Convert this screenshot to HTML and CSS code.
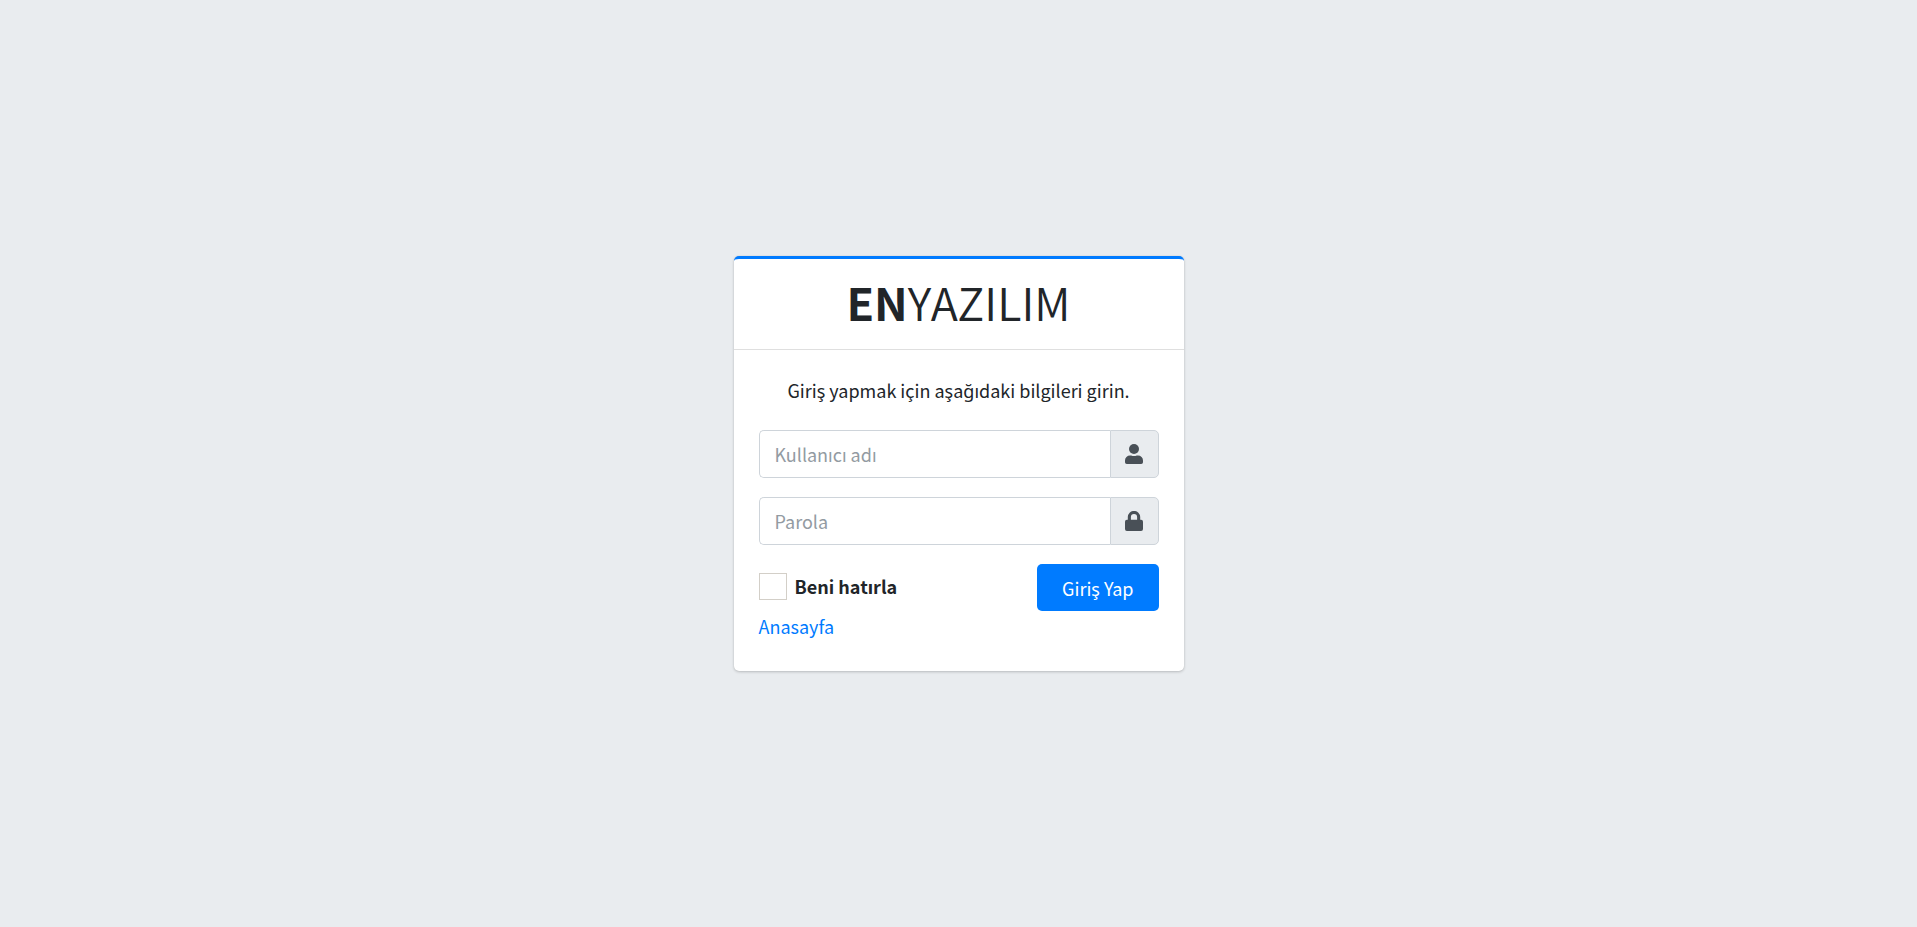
FILE: index.html
```html
<!DOCTYPE html>
<html lang="tr">
  <head>
    <meta charset="UTF-8" />
    <meta name="viewport" content="width=device-width, initial-scale=1.0" />
    <title>EN YAZILIM | Giriş</title>
    <link rel="stylesheet" href="styles.css">
  </head>
  <body>
    <main class="login-card">
      <header class="card-header">
        <h1><b>EN</b>YAZILIM</h1>
      </header>
      <div class="card-body">
        <p class="login-msg">Giriş yapmak için aşağıdaki bilgileri girin.</p>

        <form action="/login" method="post">
          <div class="input-group">
            <input type="text" id="username" name="username" placeholder="Kullanıcı adı" aria-label="Kullanıcı adı" />
            <label class="input-icon" for="username">
              <svg viewBox="0 0 18 20" width="18" height="20" aria-hidden="true">
                <circle cx="9" cy="5" r="5" />
                <path d="M5 11.5h1.200a7 7 0 0 0 5.600 0H13a5 5 0 0 1 5 5v1.700A1.800 1.800 0 0 1 16.200 20H1.800A1.800 1.800 0 0 1 0 18.200V16.500a5 5 0 0 1 5-5z" />
              </svg>
            </label>
          </div>
          <div class="input-group">
            <input type="password" id="password" name="password" placeholder="Parola" aria-label="Parola" />
            <label class="input-icon" for="password">
              <svg viewBox="0 0 18 20" width="18" height="20" aria-hidden="true">
                <path d="M16.100 8.800h-.9V6.100a6.200 6.200 0 0 0-12.400 0v2.700h-.9A1.900 1.900 0 0 0 0 10.700v7.400A1.900 1.900 0 0 0 1.900 20h14.200a1.900 1.900 0 0 0 1.900-1.900v-7.400a1.900 1.900 0 0 0-1.900-1.900zM12.100 8.800H5.900V6.100a3.100 3.100 0 0 1 6.200 0z" />
              </svg>
            </label>
          </div>
          <div class="form-footer">
            <div class="remember">
              <input type="checkbox" id="remember" name="remember" />
              <label for="remember">Beni hatırla</label>
            </div>
            <button type="submit">Giriş Yap</button>
          </div>
        </form>

        <a class="home-link" href="/">Anasayfa</a>
      </div>
    </main>
  </body>
</html>
```
FILE: styles.css
```css
* {
  box-sizing: border-box;
}

body {
  display: flex;
  align-items: center;
  justify-content: center;
  min-height: 100vh;
  margin: 0;
  background-color: #e9ecef;
  color: #212529;
  font-family: "Source Sans Pro", "Noto Sans CJK JP", "Noto Sans", sans-serif;
  font-size: 18px;
  line-height: 30px;
}

.login-card {
  width: 450px;
  background-color: #fff;
  border-top: 3px solid #007bff;
  border-radius: 5px;
  box-shadow: 0 0 1px rgba(0, 0, 0, 0.125), 0 1px 3px rgba(0, 0, 0, 0.2);
}

.card-header {
  padding: 13px 25px 17px;
  border-bottom: 1px solid #dfdfdf;
  text-align: center;
}

.card-header h1 {
  margin: 0;
  font-size: 45px;
  font-weight: 350;
  line-height: 60px;
}

.card-header b {
  font-weight: 700;
}

.card-body {
  padding: 25px 25px 30px;
}

.login-msg {
  margin: 0 0 25px;
  text-align: center;
}

.input-group {
  display: flex;
  height: 48px;
  margin-bottom: 19px;
}

.input-group input {
  flex: 1;
  min-width: 0;
  padding: 0 15px;
  border: 1px solid #ced4da;
  border-right: none;
  border-radius: 5px 0 0 5px;
  background-color: #fff;
  color: #495057;
  font: inherit;
}

.input-group input::placeholder {
  color: #939ba2;
  opacity: 1;
}

.input-icon {
  display: flex;
  align-items: center;
  justify-content: center;
  width: 49px;
  border: 1px solid #ced4da;
  border-radius: 0 5px 5px 0;
  background-color: #e9ecef;
}

.input-icon svg {
  fill: #495057;
}

.form-footer {
  display: flex;
  align-items: flex-start;
  justify-content: space-between;
}

.remember {
  display: flex;
  align-items: center;
  gap: 8px;
  padding-top: 7px;
}

.remember input {
  appearance: none;
  width: 28px;
  height: 27px;
  margin: 0;
  border: 1px solid #d3cfc8;
  background-color: #fff;
}

.remember input:checked {
  background-color: #007bff;
}

.remember label {
  font-weight: 700;
}

.form-footer button {
  height: 47px;
  padding: 0 25px;
  border: none;
  border-radius: 5px;
  background-color: #007bff;
  color: #fff;
  font: inherit;
  cursor: pointer;
}

.form-footer button:hover {
  background-color: #0069d9;
}

.home-link {
  color: #007bff;
  text-decoration: none;
}
```
